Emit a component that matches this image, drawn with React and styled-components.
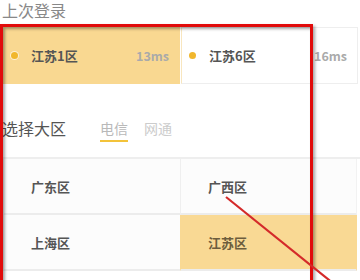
import React from 'react';
import styled, { createGlobalStyle } from 'styled-components';

const GlobalStyle = createGlobalStyle`
  body {
    margin: 0;
    background: #ffffff;
    font-family: "Noto Sans CJK SC", "Noto Sans", sans-serif;
  }
`;

const recent = [
  { name: '江苏1区', ping: '13ms', active: true },
  { name: '江苏6区', ping: '16ms', active: false },
];

const areas = [
  { name: '广东区' },
  { name: '广西区' },
  { name: '上海区' },
  { name: '江苏区', active: true },
];

const App = () => (
  <Page>
    <GlobalStyle />
    <Heading>上次登录</Heading>
    <RecentRow>
      {recent.map((r) => (
        <RecentCard key={r.name} $active={r.active}>
          <Dot />
          <ServerName>{r.name}</ServerName>
          <Ping>{r.ping}</Ping>
        </RecentCard>
      ))}
    </RecentRow>

    <SectionHead>
      <Heading as="div" $dark>选择大区</Heading>
      <Tabs>
        <Tab $active>电信</Tab>
        <Tab>网通</Tab>
      </Tabs>
    </SectionHead>

    <AreaGrid>
      {areas.map((a) => (
        <AreaCell key={a.name} $active={a.active}>
          {a.name}
        </AreaCell>
      ))}
    </AreaGrid>

    <Marker />
    <Arrow width="360" height="280" viewBox="0 0 360 280">
      <line x1="226" y1="197" x2="334" y2="284" stroke="#d42a2a" strokeWidth="2.2" />
    </Arrow>
  </Page>
);

const Page = styled.div`
  position: relative;
  width: 360px;
  height: 280px;
  overflow: hidden;
  background: #fff;
`;

const Heading = styled.h2`
  margin: 0;
  padding: 1px 0 0 2px;
  font-size: 16px;
  line-height: 18px;
  font-weight: 400;
  color: ${(p) => (p.$dark ? '#555' : '#888')};
`;

const RecentRow = styled.div`
  display: grid;
  grid-template-columns: 177px 177px;
  gap: 1px;
  margin: 8px 0 0 3px;
`;

const RecentCard = styled.div`
  display: flex;
  align-items: center;
  height: 57px;
  padding: 0 10px 0 7px;
  box-sizing: border-box;
  background: ${(p) => (p.$active ? '#f9d891' : '#fff')};
  border: 1px solid ${(p) => (p.$active ? '#f9d891' : '#eeeeee')};
  border-left-color: ${(p) => (p.$active ? '#f9d891' : '#f8e6bf')};
`;

const Dot = styled.span`
  width: 7px;
  height: 7px;
  border-radius: 50%;
  background: #f1b72d;
  box-shadow: 0 0 0 1px rgba(255, 255, 255, 0.6);
  flex: none;
`;

const ServerName = styled.span`
  margin-left: 13px;
  font-size: 13px;
  font-weight: 700;
  color: #555;
  flex: 1;
`;

const Ping = styled.span`
  font-size: 12.5px;
  font-weight: 700;
  color: #aaa;
`;

const SectionHead = styled.div`
  display: flex;
  align-items: center;
  gap: 34px;
  margin-top: 29px;
`;

const Tabs = styled.div`
  display: flex;
  gap: 16px;
`;

const Tab = styled.span`
  font-size: 14px;
  line-height: 20px;
  padding-bottom: 2px;
  color: ${(p) => (p.$active ? '#b9b9b9' : '#cccccc')};
  border-bottom: 2px solid ${(p) => (p.$active ? '#f3c33a' : 'transparent')};
  margin-top: 5px;
`;

const AreaGrid = styled.div`
  display: grid;
  grid-template-columns: 177px 177px;
  margin: 15px 0 0 3px;
  border-top: 2px solid #eeeeee;
`;

const AreaCell = styled.div`
  display: flex;
  align-items: center;
  height: 56px;
  padding-left: 27px;
  box-sizing: border-box;
  font-size: 13px;
  font-weight: 700;
  color: ${(p) => (p.$active ? '#6d5d3d' : '#555')};
  background: ${(p) => (p.$active ? '#f9d994' : '#fcfcfc')};
  border-bottom: 2px solid #ececec;
  border-left: 1px solid ${(p) => (p.$active ? '#f9d994' : '#efefef')};
  &:nth-child(2n) {
    border-right: 1px solid ${(p) => (p.$active ? '#f9d994' : '#f2f2f2')};
  }
`;

const Marker = styled.div`
  position: absolute;
  left: 0;
  top: 24px;
  width: 313px;
  height: 280px;
  box-sizing: border-box;
  border: 3px solid #e10b0b;
  box-shadow: 2px 2px 3px rgba(0, 0, 0, 0.35), inset 2px 2px 3px rgba(0, 0, 0, 0.35);
  pointer-events: none;
`;

const Arrow = styled.svg`
  position: absolute;
  left: 0;
  top: 0;
  pointer-events: none;
`;

export default App;
